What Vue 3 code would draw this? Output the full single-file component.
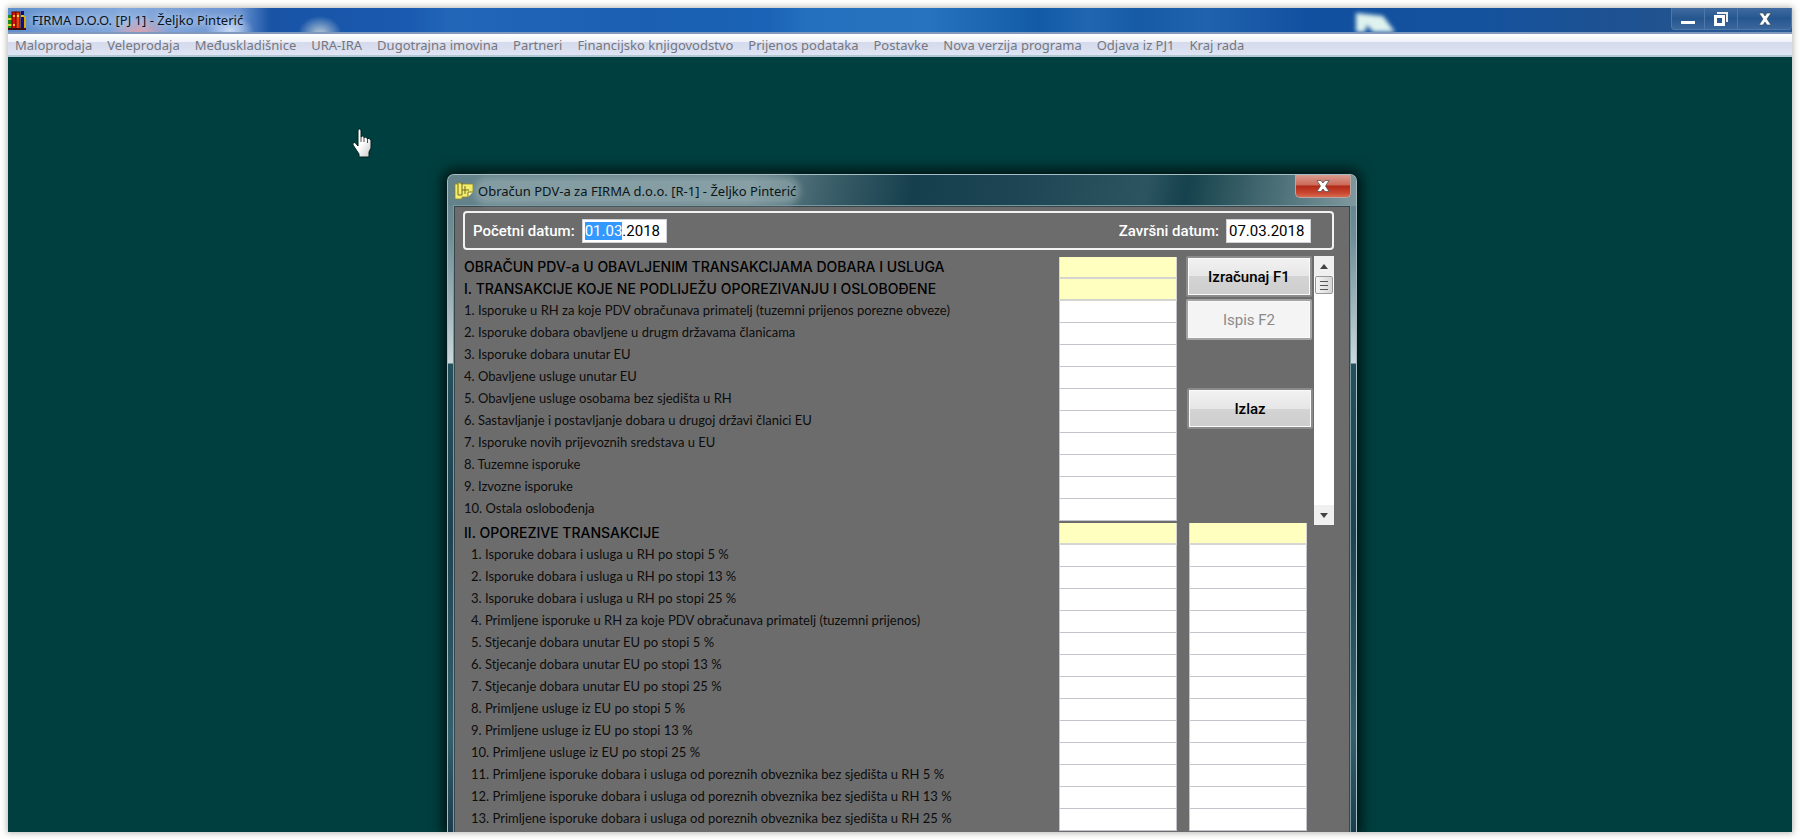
<script setup>
import { onMounted, ref } from 'vue'

const menu = [
  'Maloprodaja', 'Veleprodaja', 'Međuskladišnice', 'URA-IRA', 'Dugotrajna imovina',
  'Partneri', 'Financijsko knjigovodstvo', 'Prijenos podataka', 'Postavke',
  'Nova verzija programa', 'Odjava iz PJ1', 'Kraj rada',
]

const exempt = [
  { text: 'OBRAČUN PDV-a U OBAVLJENIM TRANSAKCIJAMA DOBARA I USLUGA', head: true },
  { text: 'I. TRANSAKCIJE KOJE NE PODLIJEŽU OPOREZIVANJU I OSLOBOĐENE', head: true },
  { text: '1. Isporuke u RH za koje PDV obračunava primatelj (tuzemni prijenos porezne obveze)' },
  { text: '2. Isporuke dobara obavljene u drugm državama članicama' },
  { text: '3. Isporuke dobara unutar EU' },
  { text: '4. Obavljene usluge unutar EU' },
  { text: '5. Obavljene usluge osobama bez sjedišta u RH' },
  { text: '6. Sastavljanje i postavljanje dobara u drugoj državi članici EU' },
  { text: '7. Isporuke novih prijevoznih sredstava u EU' },
  { text: '8. Tuzemne isporuke' },
  { text: '9. Izvozne isporuke' },
  { text: '10. Ostala oslobođenja' },
]

const taxable = [
  { text: 'II. OPOREZIVE TRANSAKCIJE', head: true },
  { text: '1. Isporuke dobara i usluga u RH po stopi 5 %' },
  { text: '2. Isporuke dobara i usluga u RH po stopi 13 %' },
  { text: '3. Isporuke dobara i usluga u RH po stopi 25 %' },
  { text: '4. Primljene isporuke u RH za koje PDV obračunava primatelj (tuzemni prijenos)' },
  { text: '5. Stjecanje dobara unutar EU po stopi 5 %' },
  { text: '6. Stjecanje dobara unutar EU po stopi 13 %' },
  { text: '7. Stjecanje dobara unutar EU po stopi 25 %' },
  { text: '8. Primljene usluge iz EU po stopi 5 %' },
  { text: '9. Primljene usluge iz EU po stopi 13 %' },
  { text: '10. Primljene usluge iz EU po stopi 25 %' },
  { text: '11. Primljene isporuke dobara i usluga od poreznih obveznika bez sjedišta u RH 5 %' },
  { text: '12. Primljene isporuke dobara i usluga od poreznih obveznika bez sjedišta u RH 13 %' },
  { text: '13. Primljene isporuke dobara i usluga od poreznih obveznika bez sjedišta u RH 25 %' },
]

const from = ref('01.03.2018')
const to = ref('07.03.2018')
const fromBox = ref(null)

onMounted(() => {
  fromBox.value.focus()
  fromBox.value.setSelectionRange(0, 5)
})
</script>

<template>
  <div class="page">
    <div class="app">
      <header class="titlebar">
        <svg class="app-icon" viewBox="0 0 18 20" aria-hidden="true">
          <rect x="0" y="5" width="4" height="14" fill="#1f8a1f" />
          <rect x="0" y="8" width="4" height="2" fill="#d8d820" />
          <rect x="0" y="14" width="4" height="2" fill="#d8d820" />
          <rect x="4" y="2" width="4" height="17" fill="#d81408" stroke="#5a0800" />
          <rect x="5" y="5" width="2" height="2" fill="#ffc020" />
          <rect x="5" y="14" width="2" height="2" fill="#ffc020" />
          <rect x="8" y="2" width="4" height="17" fill="#f04010" stroke="#5a0800" />
          <rect x="9" y="5" width="2" height="2" fill="#ffe040" />
          <rect x="13" y="1" width="3" height="18" fill="#101078" />
          <rect x="13" y="5" width="3" height="2" fill="#d8c020" />
          <rect x="16" y="6" width="2" height="13" fill="#d8a810" />
          <rect x="0" y="18" width="18" height="2" fill="#401010" />
        </svg>
        <h1 class="app-title">FIRMA D.O.O. [PJ 1] - Željko Pinterić</h1>
        <svg class="wallpaper" viewBox="0 0 44 20" aria-hidden="true">
          <path d="M3 1 L30 4 L42 20 L20 20 L14 13 L12 20 L3 20 Z" fill="#dff2ee" />
        </svg>
        <div class="win-buttons">
          <button type="button" aria-label="Minimiziraj">
            <svg width="16" height="16" viewBox="0 0 16 16"><rect x="1" y="10" width="14" height="3" fill="#fff" /></svg>
          </button>
          <button type="button" aria-label="Vrati">
            <svg width="16" height="16" viewBox="0 0 16 16">
              <path d="M4 2 H14 V11" fill="none" stroke="#eee" stroke-width="2" />
              <rect x="2.500" y="5.500" width="8" height="8" fill="none" stroke="#fff" stroke-width="3" />
            </svg>
          </button>
          <button type="button" class="wide" aria-label="Zatvori">
            <svg width="14" height="14" viewBox="0 0 14 14"><path d="M1 1 H5 L7 4 L9 1 H13 L9 7 L13 13 H9 L7 10 L5 13 H1 L5 7 Z" fill="#fff" stroke="#345" stroke-width=".6" /></svg>
          </button>
        </div>
      </header>

      <nav class="menubar">
        <a v-for="m in menu" :key="m" href="#">{{ m }}</a>
      </nav>

      <main class="desktop">
        <svg class="cursor" viewBox="0 0 21 30" aria-hidden="true">
          <defs>
            <linearGradient id="hand" x1="0" y1="0" x2="1" y2="1">
              <stop offset=".5" stop-color="#fff" /><stop offset="1" stop-color="#c8c8c8" />
            </linearGradient>
          </defs>
          <path d="M6 2 Q7.500 0 9 2 V9 Q10.500 7 12 9.500 Q13.500 8 15 10.500 Q17 9.500 19 12 V20 L17 24 V29 H7 V26 L1 17 Q0 14 3 14.500 L6 18 Z" fill="url(#hand)" stroke="#00201f" stroke-width="1" />
          <path d="M9 9 V14 M12 10 V14 M15.500 11 V15" stroke="#222" stroke-width=".8" />
        </svg>

        <section class="dialog" aria-labelledby="dlg-title">
          <header class="dlg-bar">
            <svg class="dlg-icon" viewBox="0 0 20 18" aria-hidden="true">
              <path d="M1 2 H4 V1 H7 V2 H19 V10 L14 15 H8 V17 H1 Z" fill="#f6ee6a" stroke="#8c8830" stroke-width=".8" />
              <path d="M4 2 V13 H8 V1 M11 4 V12 M8 8 H15" stroke="#6c6a28" fill="none" />
              <path d="M14 15 V10 H19" fill="#fffbc0" stroke="#7c7820" />
            </svg>
            <h2 id="dlg-title">Obračun PDV-a za FIRMA d.o.o. [R-1] - Željko Pinterić</h2>
            <button type="button" class="dlg-close" aria-label="Zatvori">
              <svg width="14" height="12" viewBox="0 0 14 12"><path d="M1 0.500 H5 L7 3 L9 .5 H13 L9.500 6 L13 11.500 H9 L7 9 L5 11.500 H1 L4.500 6 Z" fill="#fff" stroke="#555" stroke-width=".8" /></svg>
            </button>
          </header>

          <div class="client">
            <div class="dates">
              <label for="from">Početni datum:</label>
              <input id="from" ref="fromBox" v-model="from" type="text" />
              <label for="to" class="right">Završni datum:</label>
              <input id="to" v-model="to" type="text" />
            </div>

            <div class="upper">
              <div class="rows">
                <div v-for="(r, i) in exempt" :key="i" class="row" :class="{ head: r.head }">
                  <label :for="'a' + i">{{ r.text }}</label>
                  <input :id="'a' + i" type="text" />
                </div>
              </div>
              <div class="actions">
                <button type="button">Izračunaj F1</button>
                <button type="button" disabled>Ispis F2</button>
                <button type="button" class="exit">Izlaz</button>
              </div>
              <div class="scroll">
                <button type="button" aria-label="Gore"><svg width="8" height="5" viewBox="0 0 8 5"><path d="M0 5 L4 0 L8 5 Z" fill="#444" /></svg></button>
                <div class="thumb"><i></i><i></i><i></i></div>
                <button type="button" class="down" aria-label="Dolje"><svg width="8" height="5" viewBox="0 0 8 5"><path d="M0 0 L4 5 L8 0 Z" fill="#444" /></svg></button>
              </div>
            </div>

            <div class="rows lower">
              <div v-for="(r, i) in taxable" :key="i" class="row" :class="{ head: r.head, inset: !r.head }">
                <label :for="'b' + i">{{ r.text }}</label>
                <input :id="'b' + i" type="text" />
                <input type="text" :aria-label="r.text + ' – porez'" />
              </div>
            </div>
          </div>
        </section>
      </main>
    </div>
  </div>
</template>

<style>
html, body { background: #fff; }
</style>

<style scoped>
* { box-sizing: border-box; }
.page { height: 100vh; padding: 8px 8px 7px; overflow: hidden; }
.app {
  height: 100%;
  display: flex;
  flex-direction: column;
  box-shadow: 0 0 6px 1px rgba(110, 110, 100, .5);
}
h1, h2 { margin: 0; font-weight: 400; }
button { font: inherit; padding: 0; border: 0; background: none; }

.titlebar {
  flex: none;
  height: 26px;
  display: flex;
  align-items: center;
  overflow: hidden;
  border-bottom: 2px solid #8199bf;
  background:
    radial-gradient(ellipse 30px 16px at 132px 24px, rgba(228, 160, 170, .9), transparent),
    radial-gradient(ellipse 24px 14px at 222px 22px, rgba(225, 235, 255, .8), transparent),
    radial-gradient(ellipse 22px 18px at 312px 26px, rgba(170, 192, 210, .9) 20%, transparent),
    linear-gradient(90deg, #5f8fce 0, #86a9dc 120px, #6c95d2 230px, #1853a5 262px, #1a5ab0 400px, #2266b8 440px, #1a5fb2 640px, #1b63b6 760px, #2470be 800px, #2773bf 920px, #125aa6 1030px, #2066b0 1080px, #165ba6 1130px, #2062ad 1200px, #1150a0 1300px, #15529d 1480px, #20528f 1640px, #2c5c96 1784px);
}
.app-icon { flex: none; width: 18px; height: 20px; }
.app-title {
  margin-left: 6px;
  font: 13px/22px "Noto Sans", "Open Sans", sans-serif;
  color: #0a1420;
  white-space: nowrap;
  text-shadow: 0 0 6px #c4d8f2, 0 0 8px #c4d8f2;
}
.wallpaper { width: 44px; height: 20px; margin: 4px 274px 0 auto; filter: blur(2px); }
.win-buttons {
  flex: none;
  align-self: flex-start;
  display: flex;
  height: 22px;
  border: 1px solid #4f78aa;
  border-top: 0;
  border-radius: 0 0 4px 4px;
  background: linear-gradient(#3f6ba0, #26568f 50%, #3a679c);
}
.win-buttons button { width: 33px; display: grid; place-items: center; border-right: 1px solid #4f78aa; }
.win-buttons .wide { width: 53px; border: 0; }

.menubar {
  flex: none;
  height: 23px;
  display: flex;
  gap: 15px;
  padding-left: 7px;
  overflow: hidden;
  border-bottom: 2px solid #b4c8d4;
  background: linear-gradient(#fff, #f0f2fa 8px, #d5daec 8px, #dfe4f4);
  font: 13px/22px "Noto Sans", "Open Sans", sans-serif;
  white-space: nowrap;
}
.menubar a { color: #74777e; text-decoration: none; }

.desktop { flex: 1; min-height: 0; position: relative; overflow: hidden; background: #003f3f; }
.cursor { position: absolute; left: 344px; top: 71px; width: 21px; height: 30px; }

.dialog {
  position: absolute;
  left: 439px;
  top: 117px;
  width: 910px;
  padding: 0 6px;
  border: 1px solid #a5bdc4;
  border-bottom: 0;
  border-radius: 7px 7px 0 0;
  background: linear-gradient(#5e7f88 0, #6f8d95 60px, #a8bac0 140px, #ccd8dc 188px, #24505c 189px, #1e4250 360px, #33606e 560px, #1c3c4c);
  box-shadow: 0 0 14px 4px rgba(0, 0, 0, .75);
}
.dlg-bar {
  height: 31px;
  margin: 0 -6px;
  padding: 0 5px 0 6px;
  display: flex;
  align-items: center;
  border-radius: 6px 6px 0 0;
  background: linear-gradient(100deg, #64828a 0, #6e8990 300px, #3f626c 370px, #163f4d 460px, #1d4553 560px, #2c5460 690px, #15424c 730px, #5f7f86 850px, #809a9f);
}
.dlg-icon { flex: none; width: 20px; height: 18px; }
h2 {
  margin-left: 4px;
  font: 13px/20px "Noto Sans", "Open Sans", sans-serif;
  color: #0c1518;
  white-space: nowrap;
  border-radius: 10px;
  background: rgba(160, 182, 186, .5);
  box-shadow: 0 0 6px 4px rgba(160, 182, 186, .5);
}
.dlg-close {
  align-self: flex-start;
  width: 56px;
  height: 23px;
  margin-left: auto;
  display: grid;
  place-items: center;
  border: 1px solid #b9a5a2;
  border-top: 0;
  border-radius: 0 0 5px 5px;
  background: linear-gradient(#d99c90, #cc6a58 45%, #b02a18 50%, #c8452f 80%, #d8694e);
}
.client {
  padding: 4px 15px 2px 8px;
  border: 1px solid #37464a;
  border-bottom: 0;
  outline: 1px solid #7a99a0;
  background: #6c6c6c;
  font: 13px/22px Lato, "Liberation Sans", sans-serif;
}
.dates {
  height: 39px;
  display: flex;
  align-items: center;
  padding: 0 21px 0 8px;
  border: 2px solid #f2f2f2;
  border-radius: 4px;
  font: 15px/22px Roboto, "Liberation Sans", sans-serif;
}
.dates label { font-weight: 500; color: #fff; }
.dates .right { margin-left: auto; }
.dates input {
  width: 85px;
  height: 24px;
  margin-left: 7px;
  padding: 0 2px;
  border: 1px solid #d0d4d8;
  outline: 0;
  background: #fff;
  font: inherit;
  color: #000;
}
.dates input::selection { background: #3399ff; color: #fff; }

.upper { display: flex; margin-top: 6px; }
.upper .rows { flex: 1; padding-top: 1px; }
.row { display: flex; height: 22px; }
.row label { flex: 1; padding-left: 1px; line-height: 19px; color: #0c0c0c; white-space: nowrap; }
.row.inset label { padding-left: 8px; }
.row.head label { padding-left: 1px; font-family: Inter, "Liberation Sans", sans-serif; font-size: 14px; font-weight: 500; color: #000; }
.row input {
  width: 118px;
  height: 22px;
  padding: 0 3px;
  border: 1px solid #c4c4cc;
  border-width: 0 1px 1px;
  border-radius: 0;
  outline: 0;
  background: #fff;
  font: inherit;
}
.row input + input { margin-left: 12px; }
.row.head input { background: #ffffbf; border-bottom-width: 2px; border-color: #d4d4d0; }
.lower { margin-top: -2px; padding-right: 27px; }

.actions { width: 128px; margin-left: 9px; display: flex; flex-direction: column; gap: 2px; align-items: flex-start; }
.actions button {
  width: 126px;
  height: 41px;
  border: 2px solid #8b8b8b;
  border-radius: 2px;
  box-shadow: inset 0 0 0 1px #fafafa;
  background: linear-gradient(#f2f2f2, #e6e6e6 50%, #d4d4d4 50%, #cdcdcd);
  font: 500 15px/20px Roboto, "Liberation Sans", sans-serif;
  color: #000;
}
.actions button:disabled { background: #f4f4f4; color: #8a8a8a; font-weight: 400; border-color: #a4a4a4; }
.actions .exit { margin: 46px 0 0 1px; }

.scroll { width: 20px; height: 269px; display: flex; flex-direction: column; background: #fff; }
.scroll button { height: 20px; display: grid; place-items: center; background: #f0f0f0; }
.scroll .down { margin-top: auto; }
.thumb {
  height: 18px;
  margin: 0 1px;
  display: flex;
  flex-direction: column;
  align-items: center;
  justify-content: center;
  gap: 3px;
  border: 1px solid #979797;
  border-radius: 2px;
  background: linear-gradient(90deg, #f5f5f5, #d6d6d6);
}
.thumb i { width: 8px; height: 1px; background: #555; }
</style>
